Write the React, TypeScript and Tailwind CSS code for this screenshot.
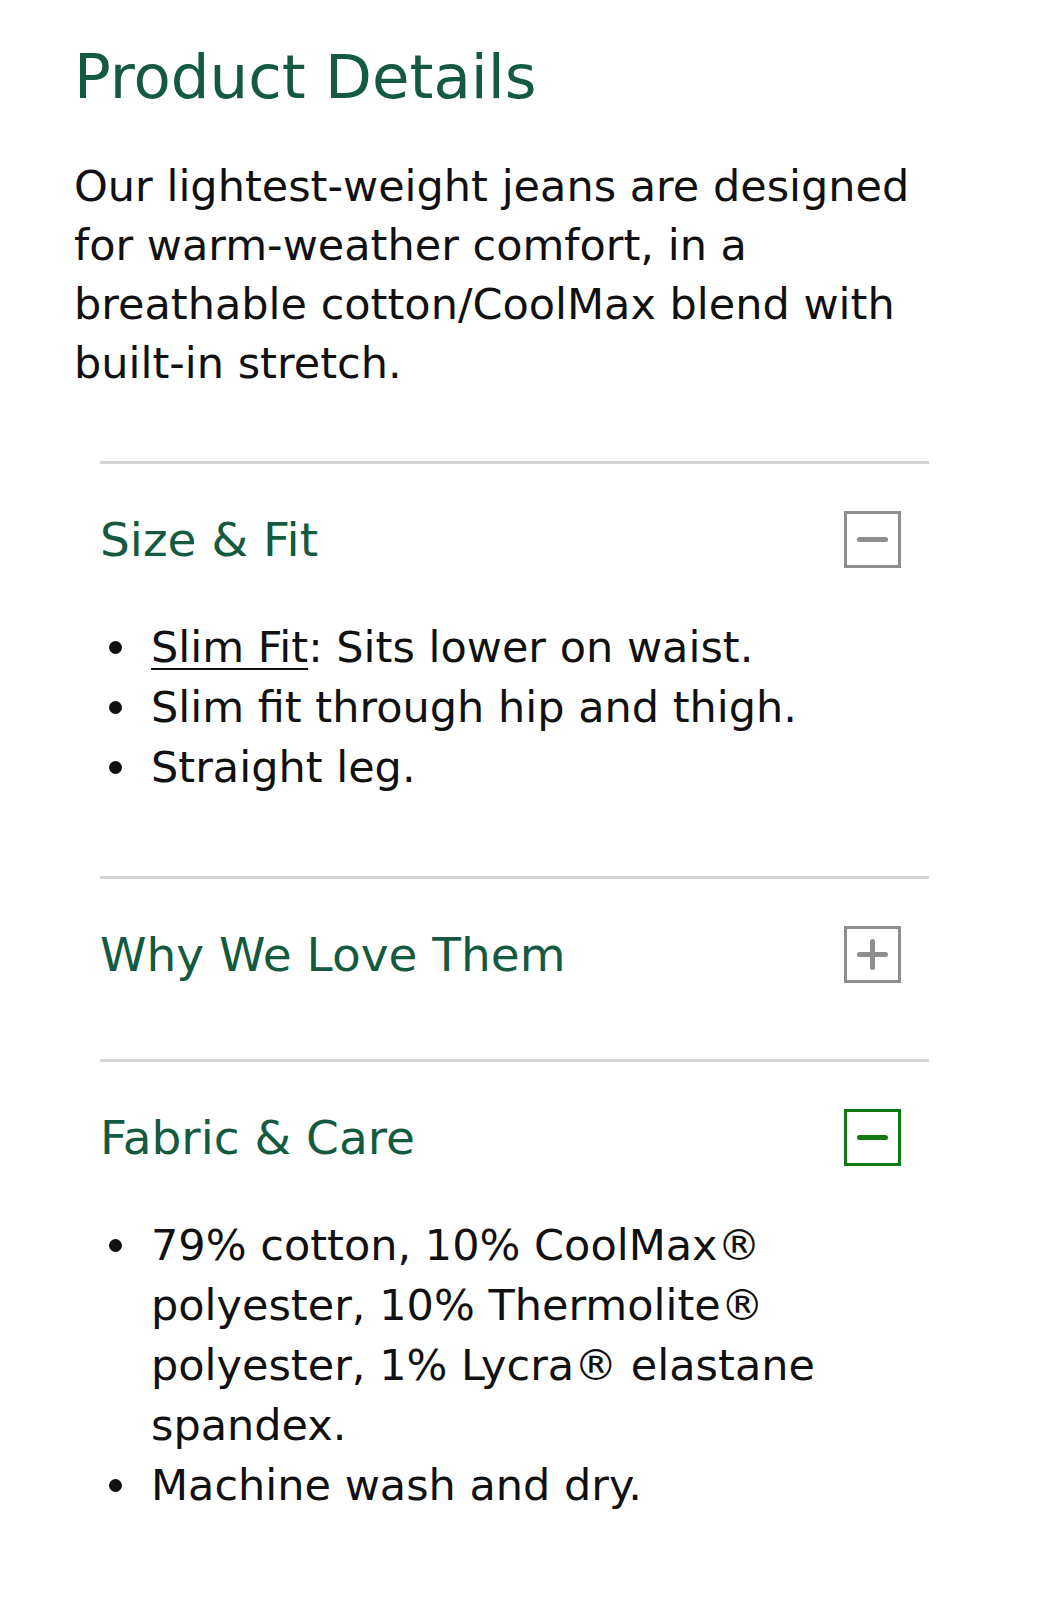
import { useState } from 'react';

type Section = {
    id: string;
    title: string;
    items: React.ReactNode[];
};

const sections: Section[] = [
    {
        id: 'size',
        title: 'Size & Fit',
        items: [
            <><a href="#" className="underline decoration-2 underline-offset-[6px]">Slim Fit</a>: Sits lower on waist.</>,
            'Slim fit through hip and thigh.',
            'Straight leg.',
        ],
    },
    {
        id: 'why',
        title: 'Why We Love Them',
        items: [],
    },
    {
        id: 'fabric',
        title: 'Fabric & Care',
        items: [
            '79% cotton, 10% CoolMax® polyester, 10% Thermolite® polyester, 1% Lycra® elastane spandex.',
            'Machine wash and dry.',
        ],
    },
];

function ToggleIcon({ open, active }: { open: boolean; active: boolean }) {
    const color = active ? 'border-[#0f7a12]' : 'border-[#8e8e8e]';
    const bar = active ? 'bg-[#0f7a12]' : 'bg-[#8e8e8e]';
    return (
        <span className={`relative flex h-[57px] w-[57px] shrink-0 items-center justify-center border-[3px] ${color}`}>
            <span className={`h-[5px] w-[31px] rounded-full ${bar}`} />
            {!open && <span className={`absolute h-[31px] w-[5px] rounded-full ${bar}`} />}
        </span>
    );
}

export default function App() {
    const [open, setOpen] = useState<Record<string, boolean>>({ size: true, why: false, fabric: true });
    const [focused, setFocused] = useState('fabric');

    const toggle = (id: string) => {
        setOpen({ ...open, [id]: !open[id] });
        setFocused(id);
    };

    return (
        <div className="min-h-[1600px] bg-white pl-[74px] pt-[41px] text-[#111] [font-family:'DejaVu_Sans',sans-serif]">
            <h2 className="text-[61px] leading-[72px] text-[#145a40]">Product Details</h2>

            <p className="mt-[44px] w-[870px] text-[43px] leading-[59px]">
                Our lightest-weight jeans are designed for warm-weather comfort, in a breathable cotton/CoolMax blend with built-in stretch.
            </p>

            <div className="ml-[26px] mt-[68px] w-[829px]">
                {sections.map((s) => (
                    <div key={s.id} className="border-t-[3px] border-[#d4d4d4]">
                        <button
                            onClick={() => toggle(s.id)}
                            className={`flex w-full items-center justify-between pr-[28px] pt-[47px] text-left ${open[s.id] ? 'pb-[49px]' : 'pb-[76px]'}`}
                        >
                            <span className="text-[47px] leading-[57px] text-[#145a40]">{s.title}</span>
                            <ToggleIcon open={open[s.id]} active={focused === s.id} />
                        </button>
                        {open[s.id] && (
                            <ul className="w-[770px] pb-[79px] text-[43px] leading-[60px]">
                                {s.items.map((item, i) => (
                                    <li key={i} className="flex">
                                        <span className="flex h-[60px] w-[51px] shrink-0 items-center pl-[9px]">
                                            <span className="h-[13px] w-[13px] rounded-full bg-[#111]" />
                                        </span>
                                        <span>{item}</span>
                                    </li>
                                ))}
                            </ul>
                        )}
                    </div>
                ))}
            </div>
        </div>
    );
}
